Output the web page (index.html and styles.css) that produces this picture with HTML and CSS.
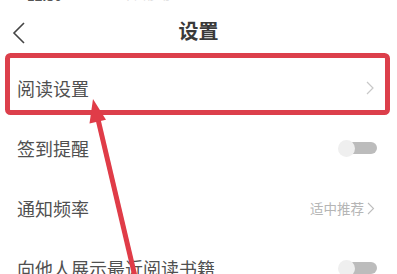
FILE: index.html
```html
<!DOCTYPE html>
<html lang="zh">
<head>
<meta charset="utf-8">
<link rel="stylesheet" href="styles.css">
</head>
<body>
<div class="page">
  <div class="status"><span class="status-time">12:30</span><span class="status-mid">中国移动</span></div>
  <header class="header">
    <svg class="back" width="14" height="22" viewBox="0 0 14 22"><polyline points="12,1 2,11 12,21" fill="none" stroke="#444" stroke-width="1.6"/></svg>
    <h1 class="title">设置</h1>
  </header>
  <div class="row">
    <span class="label">阅读设置</span>
    <svg class="chev" width="8" height="14" viewBox="0 0 8 14"><polyline points="1,1 7,7 1,13" fill="none" stroke="#c8c8c8" stroke-width="1.2"/></svg>
  </div>
  <div class="row">
    <span class="label">签到提醒</span>
    <span class="toggle"><span class="knob"></span></span>
  </div>
  <div class="row">
    <span class="label">通知频率</span>
    <span class="value">适中推荐<svg class="chev small" width="8" height="13" viewBox="0 0 8 13"><polyline points="1,1 6.5,6.5 1,12" fill="none" stroke="#bdbdbd" stroke-width="1.1"/></svg></span>
  </div>
  <div class="row">
    <span class="label">向他人展示最近阅读书籍</span>
    <span class="toggle"><span class="knob"></span></span>
  </div>
  <svg class="annot" width="397" height="274" viewBox="0 0 397 274">
    <rect x="7.5" y="55.5" width="380" height="57" rx="3" fill="none" stroke="#dc3f4b" stroke-width="5"/>
    <line x1="137" y1="285" x2="97" y2="115" stroke="#e03c48" stroke-width="5"/>
    <polygon points="93,99 106,119.7 89.5,123.5" fill="#e03c48"/>
  </svg>
</div>
</body>
</html>
```
FILE: styles.css
```css
html, body {
  margin: 0;
  padding: 0;
  background: #fff;
}
.page {
  position: relative;
  width: 397px;
  height: 274px;
  overflow: hidden;
  font-family: "Noto Sans CJK SC", "Noto Sans", sans-serif;
  color: #4a4a4a;
}
.status {
  height: 4px;
  overflow: hidden;
  padding-left: 27px;
  display: flex;
  gap: 60px;
}
.status-time {
  display: block;
  margin-top: -11px;
  font-size: 13px;
  line-height: 14px;
  font-weight: 700;
  color: #555;
}
.status-mid {
  display: block;
  margin-top: -12px;
  font-size: 12px;
  line-height: 14px;
  color: #ddd;
}
.header {
  height: 54px;
  display: flex;
  align-items: center;
  justify-content: center;
  position: relative;
}
.back {
  position: absolute;
  left: 12px;
  top: 18px;
}
.title {
  margin: 0;
  font-size: 20px;
  font-weight: 700;
  color: #3a3a3a;
  line-height: 1;
  margin-top: -1px;
}
.row {
  height: 60px;
  display: flex;
  align-items: center;
  justify-content: space-between;
  padding: 0 20px 0 17px;
}
.label {
  font-size: 18px;
  line-height: 1;
  color: #505050;
  white-space: nowrap;
}
.chev {
  margin-right: 3px;
}
.value {
  display: flex;
  align-items: center;
  gap: 3px;
  font-size: 13.5px;
  color: #b5b5b5;
}
.chev.small {
  margin-right: 2px;
}
.toggle {
  position: relative;
  width: 39px;
  height: 17px;
  display: block;
}
.toggle::before {
  content: "";
  position: absolute;
  left: 12px;
  right: 0;
  top: 2.5px;
  height: 12px;
  border-radius: 0 6px 6px 0;
  background: #bcbcbc;
}
.knob {
  position: absolute;
  left: 0;
  top: 0;
  width: 17px;
  height: 17px;
  border-radius: 50%;
  background: #efefef;
}
.annot {
  position: absolute;
  left: 0;
  top: 0;
  pointer-events: none;
}
```
